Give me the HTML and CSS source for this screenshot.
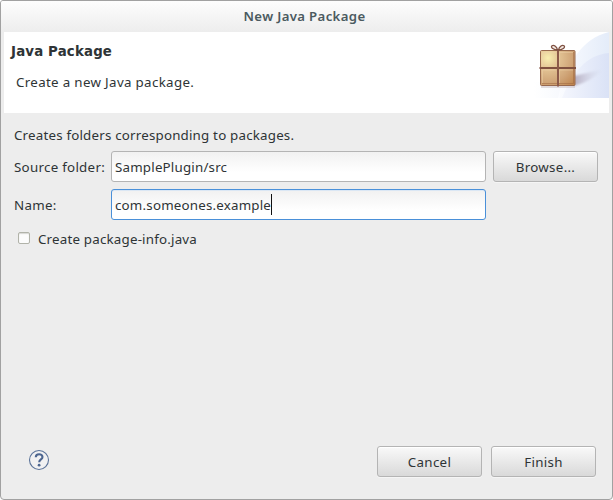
FILE: index.html
```html
<!DOCTYPE html>
<html lang="en">
<head>
<meta charset="utf-8">
<title>New Java Package</title>
<link rel="stylesheet" href="styles.css">
</head>
<body>
<main class="window">
  <header class="titlebar"><span>New Java Package</span></header>
  <section class="banner">
    <div class="banner-text">
      <h1>Java Package</h1>
      <p>Create a new Java package.</p>
    </div>
    <svg class="banner-art" width="75" height="66" viewBox="0 0 75 66">
      <defs>
        <linearGradient id="low" x1="0" x2="1"><stop offset="0" stop-color="#fff"/><stop offset="1" stop-color="#e8edf9"/></linearGradient>
        <linearGradient id="sweep" x1="0" x2="1"><stop offset="0" stop-color="#fbfcff"/><stop offset="1" stop-color="#e4ecf9"/></linearGradient>
        <linearGradient id="inner" x1="0" x2="1"><stop offset="0" stop-color="#f4f6fd"/><stop offset="1" stop-color="#dae2f6"/></linearGradient>
        <linearGradient id="shade" x1="0" x2="1"><stop offset="0" stop-color="#b5adc0"/><stop offset="1" stop-color="#d5dbed" stop-opacity="0"/></linearGradient>
        <radialGradient id="box" gradientUnits="userSpaceOnUse" cx="14" cy="26" r="38"><stop offset="0" stop-color="#f8efb0"/><stop offset=".3" stop-color="#e2c293"/><stop offset=".65" stop-color="#cfa477"/><stop offset="1" stop-color="#bd8149"/></radialGradient>
        <filter id="soft" x="-30%" y="-30%" width="160%" height="160%"><feGaussianBlur stdDeviation="1.3"/></filter>
      </defs>
      <path d="M0 66V50H75V66Z" fill="url(#low)"/>
      <path d="M24 66C31 34 48 6 75 0V66Z" fill="url(#sweep)"/>
      <path d="M28 66C38 41 52 23 75 21V66Z" fill="url(#inner)"/>
      <path d="M40 44 70 37Q56 50 40 54Z" fill="url(#shade)" filter="url(#soft)"/>
      <path d="M7 55H41" stroke="#c8bbc0" stroke-width="1"/>
      <rect x="6.5" y="18.5" width="34.5" height="35" rx="1" fill="url(#box)" stroke="#97694e"/>
      <path d="M8.5 34V20.5H22M25.5 34V20.5H39M8.5 51V38H22M25.5 51V38H39" fill="none" stroke="#f0d5ad" stroke-opacity=".45"/>
      <path d="M8 51.5H39.5V20" fill="none" stroke="#9b643d" stroke-opacity=".5"/>
      <path d="M5.5 36H42" stroke="#80513f" stroke-width="2"/>
      <path d="M24 18V54.5" stroke="#8b5948" stroke-width="2"/>
      <path d="M23.5 18C20 18 16 15.5 18 13.8C20 12.5 23 15 23.5 18ZM24.5 18C28 18 32 15.5 30 13.8C28 12.5 25 15 24.5 18Z" fill="#f3e9e3" stroke="#7f5142" stroke-width="1.3"/>
    </svg>
  </section>
  <section class="form">
    <p class="intro">Creates folders corresponding to packages.</p>
    <div class="row source"><label>Source folder:</label><div class="field">SamplePlugin/src</div><button>Browse...</button></div>
    <div class="row name"><label>Name:</label><div class="field focused">com.someones.example<i class="caret"></i></div></div>
    <div class="check"><i class="box"></i><span>Create package-info.java</span></div>
  </section>
  <footer>
    <svg class="help" width="22" height="22" viewBox="0 0 22 22">
      <circle cx="11" cy="11" r="9.5" fill="#f1f1f2" stroke="#5b7399" stroke-width="1.1"/>
      <path d="M7.8 8.2C7.8 6.5 9 5.2 11.1 5.2C13.2 5.2 14.5 6.3 14.5 8C14.5 10.4 11.2 10.4 11.2 13.2" fill="none" stroke="#4d6690" stroke-width="2.1"/>
      <circle cx="11.1" cy="16.2" r="1.4" fill="#4d6690"/>
    </svg>
    <div class="actions"><button>Cancel</button><button>Finish</button></div>
  </footer>
</main>
</body>
</html>
```
FILE: styles.css
```css
* { box-sizing: border-box; }
body { margin: 0; background: #fff; font: 13.33px/20px "Noto Sans", "Open Sans", sans-serif; letter-spacing: .2px; color: #2e3436; }
h1, p { margin: 0; }
.window { width: 613px; height: 500px; border: 1px solid #a1a1a1; border-radius: 3px 3px 4px 4px; background: #ededed; display: flex; flex-direction: column; overflow: hidden; }
.titlebar { height: 31px; flex: none; text-align: center; padding: 5px 4px 0 0; background: linear-gradient(#fdfdfd, #ededed); font-weight: 600; color: #4b5a60; font-size: 13.2px; letter-spacing: .35px; }
.banner { height: 81px; flex: none; margin: 0 3px; background: #fff; display: flex; justify-content: space-between; }
.banner-text { padding: 10px 0 0 7px; }
h1 { font: bold 13.33px/20px "DejaVu Sans", sans-serif; letter-spacing: .17px; }
.banner-text p { margin: 10px 0 0 5px; letter-spacing: .33px; }
.form { padding: 12px 0 0 13px; flex: 1; }
.intro { height: 26px; }
.row { display: flex; height: 31px; line-height: 31px; }
.name { margin-top: 7px; }
label { width: 97px; flex: none; padding-top: 1px; white-space: nowrap; letter-spacing: .28px; }
.field { width: 375px; border: 1px solid #b4b4b4; border-radius: 3px; background: linear-gradient(#f1f1f1, #fff 70%); padding-left: 3px; line-height: 30px; display: flex; align-items: center; white-space: nowrap; }
.focused { border-color: #4a90d9; box-shadow: inset 0 1px #dbe7f4; }
.caret { width: 1px; height: 21px; margin-top: -1px; background: #111; }
button { width: 105px; height: 31px; padding: 2px 0 0; border: 1px solid #b4b4b4; border-radius: 3px; background: linear-gradient(#f9f9f9, #d9d9d9); box-shadow: inset 0 1px #fff, 0 1px #f5f5f5; font: inherit; line-height: 27px; letter-spacing: .3px; color: inherit; }
.source button { margin-left: 7px; }
.check { display: flex; align-items: center; height: 20px; margin: 9px 0 0 4px; gap: 8px; }
.box { width: 12px; height: 12px; margin-top: -2px; border: 1px solid #b1b3a9; border-radius: 2px; background: #fcfcfc; box-shadow: inset 0 1px 1px #d8d8d4; }
footer { height: 53px; flex: none; display: flex; justify-content: space-between; padding: 0 16px 0 27px; }
.help { margin-top: 3px; }
.actions { display: flex; gap: 9px; }
```
